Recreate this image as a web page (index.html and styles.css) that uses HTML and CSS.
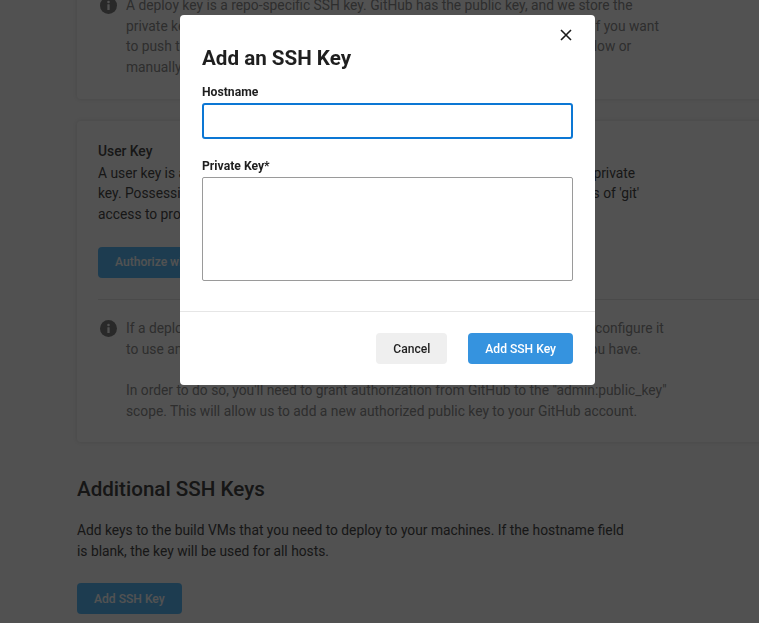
FILE: index.html
```html
<!DOCTYPE html>
<html lang="en">
<head>
    <meta charset="UTF-8">
    <meta name="viewport" content="width=device-width, initial-scale=1.0">
    <title>SSH Keys</title>
    <link rel="stylesheet" href="styles.css">
</head>
<body>

    <div class="page">
        <div class="card card-deploy">
            <div class="info-row">
                <svg class="info-icon" viewBox="0 0 18 18"><circle cx="9" cy="9" r="9" fill="#808080"/><rect x="7.8" y="7.6" width="2.4" height="6.2" rx="0.4" fill="#fff"/><circle cx="9" cy="5.2" r="1.35" fill="#fff"/></svg>
                <p>A deploy key is a repo-specific SSH key. GitHub has the public key, and we store the<br>private key. The deployment key gives CircleCI access to a single repository. If you want<br>to push to your repository from builds, you'll need a key with write access: follow or<br>manually add one to the project.</p>
            </div>
        </div>

        <div class="card card-user">
            <h4>User Key</h4>
            <p>A user key is a user-specific SSH key. GitHub has the public key, and we store the private<br>key. Possession of the private key gives the ability to act as that user, for purposes of 'git'<br>access to projects.</p>
            <button class="btn btn-page btn-authorize">Authorize with GitHub</button>
            <hr class="card-rule">
            <div class="info-row">
                <svg class="info-icon" viewBox="0 0 18 18"><circle cx="9" cy="9" r="9" fill="#808080"/><rect x="7.8" y="7.6" width="2.4" height="6.2" rx="0.4" fill="#fff"/><circle cx="9" cy="5.2" r="1.35" fill="#fff"/></svg>
                <p>If a deploy key is not sufficient for your project's desired use, you will need to configure it<br>to use an alternate user key, which holds all of the same access rights that you have.<br><br>In order to do so, you'll need to grant authorization from GitHub to the "admin:public_key"<br>scope. This will allow us to add a new authorized public key to your GitHub account.</p>
            </div>
        </div>

        <h2>Additional SSH Keys</h2>
        <p class="section-text">Add keys to the build VMs that you need to deploy to your machines. If the hostname field<br>is blank, the key will be used for all hosts.</p>
        <button class="btn btn-page">Add SSH Key</button>
    </div>

    <div class="overlay"></div>

    <div class="modal">
        <button class="close-button" aria-label="Close">
            <svg viewBox="0 0 12 12" width="12" height="12"><path d="M1 1L11 11M11 1L1 11" stroke="#1b1b1b" stroke-width="1.6" fill="none"/></svg>
        </button>
        <div class="modal-body">
            <h3>Add an SSH Key</h3>
            <label for="hostname">Hostname</label>
            <input type="text" id="hostname" class="field field-focus">
            <label for="privateKey">Private Key*</label>
            <textarea id="privateKey" class="field"></textarea>
        </div>
        <div class="modal-footer">
            <button class="btn btn-cancel">Cancel</button>
            <button class="btn btn-primary">Add SSH Key</button>
        </div>
    </div>

</body>
</html>
```

FILE: styles.css
```css
html, body {
    height: 100%;
}
body {
    margin: 0;
    overflow: hidden;
    background-color: #fafafa;
    font-family: Roboto, "Liberation Sans", Arial, sans-serif;
    color: #4a4a4a;
}
p {
    margin: 0;
    white-space: nowrap;
}
.page {
    width: 740px;
    margin-top: -20px;
    margin-left: 77px;
    font-size: 13.8px;
    line-height: 20.7px;
}
.card {
    background-color: #fff;
    border-radius: 4px;
    box-shadow: 0 0 4px rgba(0, 0, 0, 0.12);
    padding: 0 21px;
}
.card-deploy {
    height: 119px;
    box-sizing: border-box;
    padding-top: 15px;
    margin-bottom: 22px;
}
.card-user {
    padding-top: 20px;
    padding-bottom: 21px;
}
.card-user h4 {
    margin: 0 0 1px;
    font-size: 13.8px;
    font-weight: 500;
    line-height: 20.7px;
}
.info-row {
    display: flex;
    gap: 9px;
    color: #8f8f8f;
}
.info-icon {
    width: 17px;
    height: 17px;
    flex: none;
    margin: 2px 0 0 2px;
}
.btn-authorize {
    display: block;
    margin-top: 22px;
}
.card-rule {
    margin: 21px 0 18px;
    border: 0;
    border-top: 1px solid #e6e6e6;
}
h2 {
    margin: 33px 0 0;
    font-size: 20.6px;
    font-weight: 500;
    line-height: 28px;
    color: #444;
}
.section-text {
    margin: 16.6px 0 22px;
}
.btn {
    height: 31px;
    padding: 0 17px;
    border: 0;
    border-radius: 4px;
    font-family: inherit;
    font-size: 12.1px;
    font-weight: 500;
    cursor: pointer;
}
.btn-primary {
    background-color: #3593df;
    color: #fff;
}
.btn-page {
    background-color: #5cbcf8;
    color: #fff;
}
.btn-cancel {
    background-color: #efefef;
    color: #1f1f1f;
}
.overlay {
    position: fixed;
    inset: 0;
    background-color: rgba(0, 0, 0, 0.68);
}
.modal {
    position: fixed;
    left: 180px;
    top: 15px;
    width: 415px;
    height: 370px;
    background-color: #fff;
    border-radius: 4px;
}
.close-button {
    position: absolute;
    top: 14px;
    right: 23px;
    width: 12px;
    height: 12px;
    padding: 0;
    border: 0;
    background: none;
    display: flex;
}
.modal-body {
    padding: 30px 22px 0;
    height: 266px;
    border-bottom: 1px solid #e6e6e6;
}
.modal-body h3 {
    margin: 0 0 13px;
    font-size: 20.6px;
    font-weight: 700;
    line-height: 26px;
    color: #1f1f1f;
}
label {
    display: block;
    margin-bottom: 3px;
    font-size: 12.2px;
    font-weight: 700;
    line-height: 16px;
    color: #1f1f1f;
}
.field {
    display: block;
    box-sizing: border-box;
    width: 100%;
    margin: 0 0 19px;
    border: 1px solid #9a9a9a;
    border-radius: 2px;
    outline: none;
    resize: none;
    background-color: #fff;
}
.field-focus {
    height: 36px;
    border: 2px solid #0c77d4;
    border-radius: 3px;
}
textarea.field {
    height: 104px;
}
.modal-footer {
    display: flex;
    justify-content: flex-end;
    gap: 21px;
    padding: 21px 22px 0;
}
```
